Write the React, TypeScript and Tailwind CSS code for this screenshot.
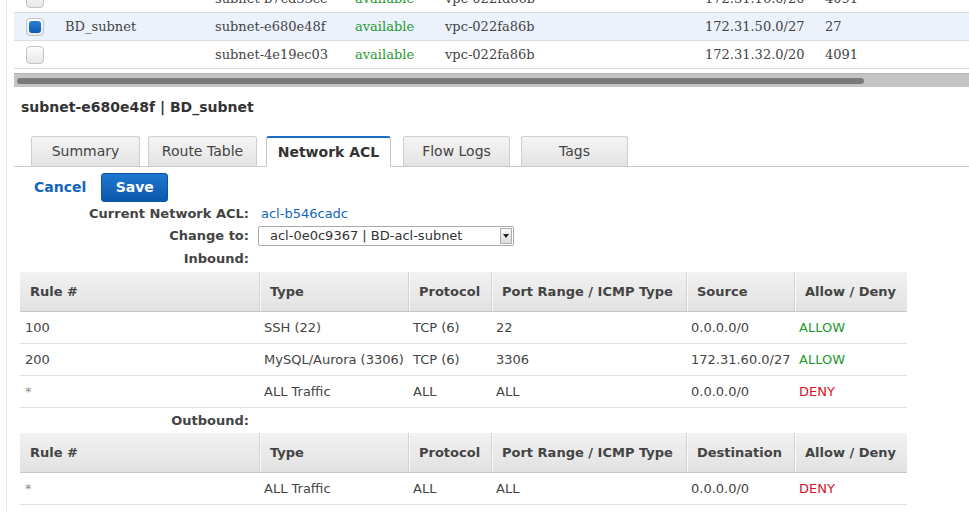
import React from "react";

const cols = ["w-[239px]", "w-[149px]", "w-[83px]", "w-[195px]", "w-[108px]", "w-[113px]"];

type Rule = { num: string; type: string; proto: string; port: string; cidr: string; action: "ALLOW" | "DENY" };

const inbound: Rule[] = [
  { num: "100", type: "SSH (22)", proto: "TCP (6)", port: "22", cidr: "0.0.0.0/0", action: "ALLOW" },
  { num: "200", type: "MySQL/Aurora (3306)", proto: "TCP (6)", port: "3306", cidr: "172.31.60.0/27", action: "ALLOW" },
  { num: "*", type: "ALL Traffic", proto: "ALL", port: "ALL", cidr: "0.0.0.0/0", action: "DENY" },
];

const outbound: Rule[] = [
  { num: "*", type: "ALL Traffic", proto: "ALL", port: "ALL", cidr: "0.0.0.0/0", action: "DENY" },
];

function Checkbox({ checked }: { checked?: boolean }) {
  return (
    <div className="w-[18px] h-[18px] rounded-[4px] border border-[#c4c4c4] bg-gradient-to-b from-[#fbfbfb] to-[#e9e9e9] flex items-center justify-center">
      {checked && <div className="w-[12px] h-[12px] rounded-[3px] bg-gradient-to-b from-[#2a7fd8] to-[#0b5bb5]" />}
    </div>
  );
}

function SubnetRow({ name, id, vpc, cidr, ips, selected, checkbox = true, className = "" }: {
  name: string; id: string; vpc: string; cidr: string; ips: string; selected?: boolean; checkbox?: boolean; className?: string;
}) {
  return (
    <div className={`flex items-center h-[28px] border-b border-[#dcdcdc] ${selected ? "bg-[#ebf2fc]" : "bg-white"} ${className}`}>
      <div className="w-[51px] pl-[12px] shrink-0">{checkbox && <Checkbox checked={selected} />}</div>
      <div className="w-[150px] shrink-0">{name}</div>
      <div className="w-[140px] shrink-0">{id}</div>
      <div className="w-[90px] shrink-0 text-[#1f9a32]">available</div>
      <div className="w-[260px] shrink-0">{vpc}</div>
      <div className="w-[120px] shrink-0">{cidr}</div>
      <div>{ips}</div>
    </div>
  );
}

function RuleTable({ rules, cidrLabel }: { rules: Rule[]; cidrLabel: string }) {
  const heads = ["Rule #", "Type", "Protocol", "Port Range / ICMP Type", cidrLabel, "Allow / Deny"];
  return (
    <div className="ml-[6px] w-[887px]">
      <div className="flex h-[40px] bg-gradient-to-b from-[#f2f2f2] to-[#e2e2e2] border-b border-[#c8c8c8]">
        {heads.map((h, i) => (
          <div
            key={h}
            className={`${cols[i]} flex items-center px-[10px] font-bold text-[13px] text-[#444] ${i > 0 ? "border-l border-[#d2d2d2] shadow-[inset_1px_0_0_#fafafa]" : ""}`}
          >
            {h}
          </div>
        ))}
      </div>
      {rules.map((r, idx) => {
        const cells = [r.num, r.type, r.proto, r.port, r.cidr];
        return (
          <div key={idx} className="flex h-[32px] items-center border-b border-[#dedede] text-[13px] text-[#444]">
            {cells.map((c, i) => (
              <div key={i} className={`${cols[i]} px-[5px] whitespace-nowrap ${c === "*" ? "text-[#8a8a8a]" : ""}`}>
                {c}
              </div>
            ))}
            <div className={`${cols[5]} px-[5px] ${r.action === "ALLOW" ? "text-[#1c9b2e]" : "text-[#d6121f]"}`}>{r.action}</div>
          </div>
        );
      })}
    </div>
  );
}

function Tab({ label, width, active, className = "" }: { label: string; width: string; active?: boolean; className?: string }) {
  if (active) {
    return (
      <div className={`${width} ${className} h-[31px] -mb-px flex items-center justify-center rounded-t-[3px] border border-[#c8c8c8] border-t-2 border-t-[#1a6fc4] border-b-white bg-white text-[14px] font-bold text-[#333]`}>
        {label}
      </div>
    );
  }
  return (
    <div className={`${width} ${className} h-[30px] flex items-center justify-center rounded-t-[3px] border border-[#cfcfcf] border-b-0 bg-gradient-to-b from-[#f5f5f5] to-[#e3e3e3] text-[14px] text-[#444]`}>
      {label}
    </div>
  );
}

export default function App() {
  return (
    <div className="w-[969px] h-[526px] overflow-hidden bg-white pl-[6px] font-['DejaVu_Sans',sans-serif]">
      <div className="h-full border-l border-[#e8e8e8] pl-[7px]">
        {/* subnet list */}
        <div className="font-['DejaVu_Serif',serif] text-[13px] text-[#444]">
          <SubnetRow className="-mt-[15px]" name="" id="subnet-b7cd33ce" vpc="vpc-022fd86b" cidr="172.31.16.0/20" ips="4091" />
          <SubnetRow name="BD_subnet" id="subnet-e680e48f" vpc="vpc-022fa86b" cidr="172.31.50.0/27" ips="27" selected />
          <SubnetRow name="" id="subnet-4e19ec03" vpc="vpc-022fa86b" cidr="172.31.32.0/20" ips="4091" />
        </div>
        <div className="mt-[4px] h-[14px] bg-[#c4c4c4] border-t border-[#b4b4b4] flex items-center pl-[3px]">
          <div className="w-[847px] h-[6px] rounded-full bg-[#7a7a7a]" />
        </div>

        {/* details */}
        <div className="pl-[7px] mt-[12px] h-[17px] text-[14px] font-bold text-[#333] leading-[17px]">
          subnet-e680e48f | BD_subnet
        </div>

        <div className="mt-[20px] flex items-end pl-[17px] border-b border-[#c8c8c8]">
          <Tab label="Summary" width="w-[109px]" />
          <Tab label="Route Table" width="w-[109px]" className="ml-[8px]" />
          <Tab label="Network ACL" width="w-[125px]" className="ml-[9px]" active />
          <Tab label="Flow Logs" width="w-[107px]" className="ml-[12px]" />
          <Tab label="Tags" width="w-[107px]" className="ml-[11px]" />
        </div>

        <div className="mt-[6px] flex items-center pl-[20px] gap-[16px]">
          <span className="text-[14px] font-bold text-[#1166bb]">Cancel</span>
          <button className="w-[67px] h-[29px] -ml-[1px] rounded-[3px] border border-[#0b55a0] bg-gradient-to-b from-[#1f78d0] to-[#0a58ab] text-[14px] font-bold text-white">
            Save
          </button>
        </div>

        <div className="mt-[1px] grid grid-cols-[235px_1fr] gap-x-[12px] items-center text-[13px]">
          <div className="h-[22px] flex items-center justify-end font-bold text-[#444]">Current Network ACL:</div>
          <div className="h-[22px] flex items-center text-[#1166bb]">acl-b546cadc</div>
          <div className="h-[22px] flex items-center justify-end font-bold text-[#444]">Change to:</div>
          <div className="h-[22px] flex items-center">
            <div className="-ml-[3px] w-[256px] h-[20px] flex items-center justify-between border border-[#a9a9a9] rounded-[2px] bg-white pl-[11px] pr-[1px] text-[#333]">
              <span>acl-0e0c9367 | BD-acl-subnet</span>
              <div className="w-[12px] h-[16px] border border-[#b0b0b0] bg-gradient-to-b from-[#f6f6f6] to-[#dcdcdc] flex items-center justify-center">
                <div className="w-0 h-0 border-l-[3px] border-r-[3px] border-t-[4px] border-l-transparent border-r-transparent border-t-[#222]" />
              </div>
            </div>
          </div>
          <div className="h-[23px] flex items-center justify-end font-bold text-[#444]">Inbound:</div>
          <div />
        </div>

        <div className="mt-[2px]">
          <RuleTable rules={inbound} cidrLabel="Source" />
        </div>

        <div className="grid grid-cols-[235px_1fr] text-[13px]">
          <div className="h-[25px] flex items-center justify-end font-bold text-[#444]">Outbound:</div>
        </div>

        <RuleTable rules={outbound} cidrLabel="Destination" />
      </div>
    </div>
  );
}
